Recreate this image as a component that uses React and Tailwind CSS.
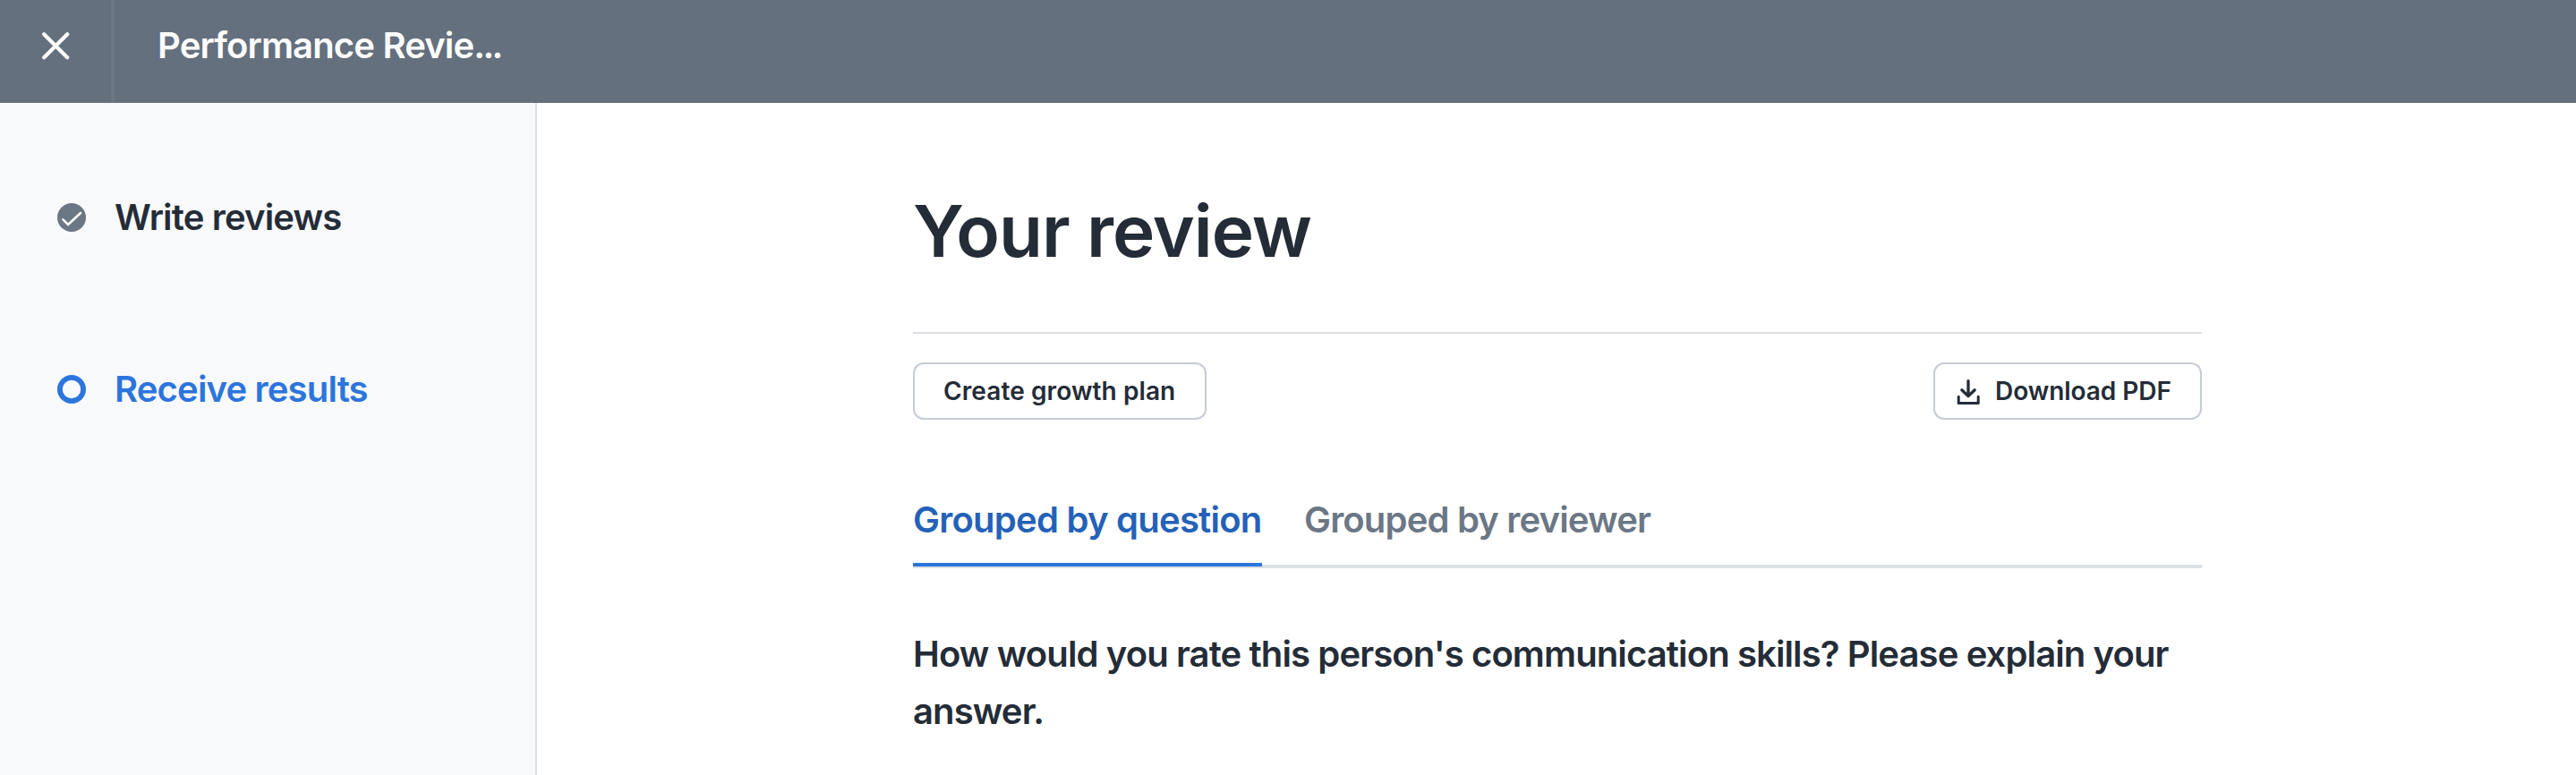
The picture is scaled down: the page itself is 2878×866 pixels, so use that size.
function CloseIcon() {
  return (
    <svg className="size-8" viewBox="0 0 32 32" fill="none" stroke="currentColor" strokeWidth="4.2" strokeLinecap="round">
      <path d="M3.2 3.2 29.2 29.2M29.2 3.2 3.2 29.2" />
    </svg>
  );
}

function DoneIcon() {
  return (
    <svg className="size-8" viewBox="0 0 32 32" fill="none">
      <circle cx="16" cy="16" r="16" fill="#6b7785" />
      <path d="M6.4 18.4 12.1 24 26 11" stroke="white" strokeWidth="2.6" strokeLinecap="round" />
    </svg>
  );
}

function CurrentIcon() {
  return (
    <svg className="size-8" viewBox="0 0 32 32" fill="none">
      <circle cx="16" cy="16" r="13.1" stroke="#2c75dc" strokeWidth="5.8" />
    </svg>
  );
}

function DownloadIcon() {
  return (
    <svg className="h-[30px] w-[26px]" viewBox="0 0 26 30" fill="none" stroke="currentColor" strokeLinecap="round" strokeLinejoin="round">
      <path d="M13 3.6V20M5.8 13.8 13 20.6 20.2 13.8" strokeWidth="3.3" />
      <path d="M2.2 21.2V28.5H24.2V21.2" strokeWidth="3" />
    </svg>
  );
}

export default function App() {
  return (
    <div className="flex h-[866px] flex-col overflow-hidden bg-white font-['Inter',sans-serif] font-semibold text-[#242c37]">
      <header className="flex h-[115px] shrink-0 bg-[#64707d] text-white">
        <button aria-label="Close" className="flex h-full w-32 items-center justify-center border-r-4 border-[#6b7785] pb-[13px]">
          <CloseIcon />
        </button>
        <h2 className="ml-12 mt-[19px] text-[40px] leading-[64px] tracking-[-0.84px]">
          Performance Revie<span className="tracking-[-2.6px]">...</span>
        </h2>
      </header>

      <div className="flex min-h-0 flex-1">
        <nav className="w-[600px] shrink-0 border-r-2 border-[#dce0e5] bg-[#f8f9fb] pl-16 pt-24">
          <ul className="flex flex-col gap-32 text-[40px] leading-[64px] tracking-[-0.82px]">
            <li className="flex items-center gap-8">
              <DoneIcon />
              Write reviews
            </li>
            <li className="flex items-center gap-8 text-[#2c75dc]">
              <CurrentIcon />
              Receive results
            </li>
          </ul>
        </nav>

        <main className="flex-1 pl-[420px]">
          <div className="w-[1440px]">
            <h1 className="pt-[95px] text-[80px] leading-[96px] tracking-[-0.98px]">Your review</h1>
            <div className="mt-[65px] flex justify-between border-t-2 border-[#dce0e5] pt-8 text-[28px]">
              <button className="flex h-16 w-[328px] items-center rounded-xl border-2 border-[#c7ccd6] pl-8 tracking-[0.1px]">
                Create growth plan
              </button>
              <button className="flex h-16 w-[300px] items-center gap-[17px] rounded-xl border-2 border-[#c7ccd6] pl-6 tracking-[-0.05px]">
                <DownloadIcon />
                Download PDF
              </button>
            </div>

            <div className="mt-20 flex h-[86px] gap-[47px] border-b-4 border-[#dcdfe4] text-[40px] leading-[64px] whitespace-nowrap">
              <button className="-mb-0.5 flex h-[84px] w-[390px] border-b-4 border-[#2c75dc] tracking-[-0.75px] text-[#2461b8]">
                Grouped by question
              </button>
              <button className="flex tracking-[-0.82px] text-[#6b7785]">Grouped by reviewer</button>
            </div>

            <p className="mt-16 text-[40px] leading-[64px] tracking-[-0.88px]">
              How would you rate this person's communication skills? Please explain your answer.
            </p>
          </div>
        </main>
      </div>
    </div>
  );
}
